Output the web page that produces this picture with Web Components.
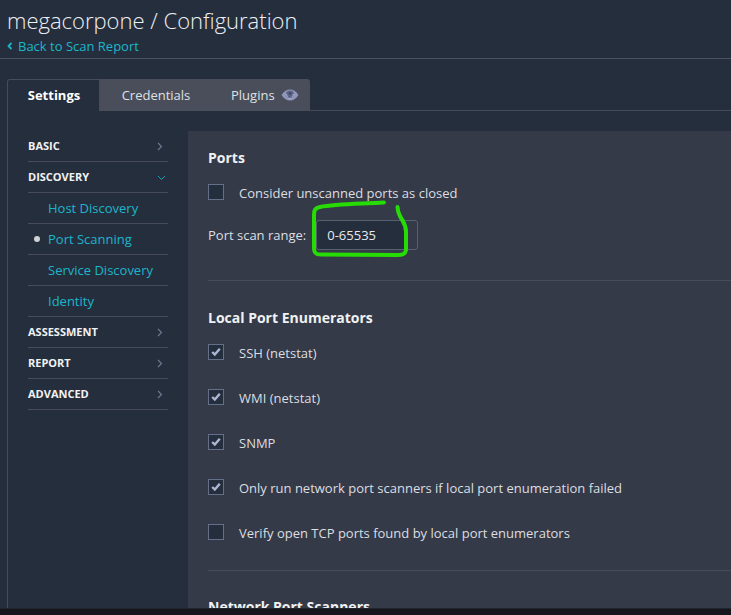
<!doctype html>
<html><head><meta charset="utf-8"><title>Configuration</title>
<style>
html,body{margin:0;height:615px;overflow:hidden;background:#15171c}
body{font-family:"Open Sans",sans-serif;color:#e8eaee}
</style></head><body>
<app-page>
  <page-header slot="header" title="megacorpone / Configuration" back="Back to Scan Report"></page-header>
  <tab-bar slot="tabs"></tab-bar>
  <side-nav slot="nav"></side-nav>
  <settings-panel slot="panel"></settings-panel>
</app-page>
<script>
function def(name, css, html){
  customElements.define(name, class extends HTMLElement{
    connectedCallback(){
      if(this.shadowRoot) return;
      const r=this.attachShadow({mode:'open'});
      r.innerHTML='<style>'+css+'</style>'+(typeof html==='function'?html(this):html);
    }
  });
}
def('app-page',`
:host{display:block;height:608px;background:#252e3d;position:relative;overflow:hidden;border-bottom:1px solid #20242d}
.body{margin:0 0 0 7px;border-left:1px solid #464c58;display:flex;gap:20px;padding:20px 0 0 20px;height:498px;box-sizing:border-box}
.tabs{margin:20px 0 0 7px}
svg{position:absolute;left:0;top:0;pointer-events:none}
::slotted(side-nav){flex:0 0 140px}
::slotted(settings-panel){flex:1 1 auto}
`,`<slot name="header"></slot><div class="tabs"><slot name="tabs"></slot></div>
<div class="body"><slot name="nav"></slot><slot name="panel"></slot></div>
<svg width="731" height="615" viewBox="0 0 731 615" fill="none"><path d="M384 202.500 C360 204 336 204 320 207 C315 208 314 210 314 215 L314 248 C314 253 316 254.500 321 254.500 L398 255 C404 255 406 253 406 249 L406 232 C406 224 403 222 400 216 C398 212 397.500 210 397.500 207" stroke="#27dc05" stroke-width="4" stroke-linecap="round" stroke-linejoin="round"/></svg>`);
def('page-header',`
:host{display:block;height:58px;border-bottom:1px solid #4b505b;padding-left:7px}
h1{margin:0;padding-top:4px;font:300 22px/32px "Open Sans",sans-serif;color:#eef0f3}
a{display:flex;align-items:center;gap:5px;margin-top:1px;font:400 13px/18px "Open Sans",sans-serif;color:#1cb6cb}
svg{display:block;margin-top:-1px}
`,h=>`<h1>${h.getAttribute('title')}</h1><a><svg width="6" height="8" viewBox="0 0 6 8"><path d="M4.500 1 L1.500 4 L4.500 7" fill="none" stroke="#1cb6cb" stroke-width="1.800"/></svg>${h.getAttribute('back')}</a>`);
def('tab-bar',`
:host{display:flex;height:32px;font:400 13px/32px "Open Sans",sans-serif;position:relative}
.t{background:#4a4e5a;color:#dfe1e5;box-sizing:border-box;text-align:center;height:32px}
.on{width:93px;background:#252e3d;color:#fff;font-weight:700;border:1px solid #464c58;border-bottom:0;border-radius:3px 0 0 0;line-height:30px;padding-left:1px}
.c{width:110px;padding-left:2px}
.p{width:100px;display:flex;gap:6px;align-items:center;border-radius:0 3px 0 0;padding-left:21px;text-align:left}
.fill{flex:1;height:32px;border-bottom:1px solid #464c58;box-sizing:border-box}
svg{display:block}
`,`<div class="t on">Settings</div><div class="t c">Credentials</div><div class="t p">Plugins<svg width="18" height="12" viewBox="0 0 18 12"><path d="M0.500 6 C3 2 6 0.500 9 0.500 C12 0.500 15 2 17.500 6 C15 10 12 11.500 9 11.500 C6 11.500 3 10 0.500 6Z" fill="#8f97bd"/><circle cx="9" cy="5.500" r="4" fill="#5c6488"/><path d="M5.500 5 C6 8 7 9.500 9 9.500 C11 9.500 12 8 12.500 5" fill="none" stroke="#aeb4d2" stroke-width="1"/><circle cx="9" cy="4.500" r="1.300" fill="#3f4563"/></svg></div><div class="fill"></div>`);
def('nav-item',`
:host{display:flex;align-items:center;height:31px;box-sizing:border-box;border-bottom:1px solid #474c58;position:relative}
.s{font:700 11px/30px "Open Sans",sans-serif;color:#f1f2f4;flex:1}
.l{font:400 13px/30px "Open Sans",sans-serif;color:#1cb6cb;padding-left:20px;flex:1}
i{position:absolute;left:6px;top:12px;width:6px;height:6px;border-radius:50%;background:#cfd1d4}
svg{display:block;margin-right:2px;margin-top:1px}
`,h=>{
  const t=h.getAttribute('text');
  if(h.hasAttribute('sub')) return `${h.hasAttribute('current')?'<i></i>':''}<span class="l">${t}</span>`;
  return `<span class="s">${t}</span>`+(h.hasAttribute('open')
   ?`<svg width="9" height="6" viewBox="0 0 9 6"><path d="M1 1 L4.500 4.500 L8 1" fill="none" stroke="#1a9db2" stroke-width="1"/></svg>`
   :`<svg width="6" height="9" viewBox="0 0 6 9" style="margin-right:5px"><path d="M1 1 L4.500 4.500 L1 8" fill="none" stroke="#717a95" stroke-width="1.100"/></svg>`);
});
def('side-nav',`:host{display:block}`,`
<nav-item text="BASIC"></nav-item>
<nav-item text="DISCOVERY" open></nav-item>
<nav-item sub text="Host Discovery"></nav-item>
<nav-item sub current text="Port Scanning"></nav-item>
<nav-item sub text="Service Discovery"></nav-item>
<nav-item sub text="Identity"></nav-item>
<nav-item text="ASSESSMENT"></nav-item>
<nav-item text="REPORT"></nav-item>
<nav-item text="ADVANCED"></nav-item>`);
def('check-row',`
:host{display:flex;align-items:center;gap:15px;height:16px;font:400 13px/16px "Open Sans",sans-serif;color:#dcdee2}
b{flex:0 0 16px;height:16px;box-sizing:border-box;border:1px solid #64708a;background:#252e3d;display:block}
svg{display:block;margin:2px 0 0 2px}
span{position:relative;top:1px}
`,h=>`<b>${h.hasAttribute('checked')?'<svg width="10" height="10" viewBox="0 0 10 10"><path d="M1.200 5 L3.800 7.500 L8.800 1.800" fill="none" stroke="#aeb6d4" stroke-width="2.400"/></svg>':''}</b><span>${h.getAttribute('text')}</span>`);
def('settings-panel',`
:host{display:block;background:#343a47;padding:0 0 0 20px;overflow:hidden;box-sizing:border-box;height:478px}
h2{margin:0;font:700 14px/20px "Open Sans",sans-serif;color:#f0f1f3}
.first{padding-top:17px}
hr{border:0;border-top:1px solid #474c58;margin:0}
.range{display:flex;align-items:center;gap:10px;margin-top:20px;font:400 13px/16px "Open Sans",sans-serif;color:#dcdee2}
.input{width:102px;height:30px;box-sizing:border-box;border:1px solid #58606f;border-radius:3px;background:linear-gradient(90deg,#252e3d 0 88%,#343a47 88%);padding-left:10px;font:400 13px/28px "Open Sans",sans-serif;color:#e8eaee}
.list{display:flex;flex-direction:column;gap:29px}
`,`<div class="first"><h2>Ports</h2>
<check-row style="margin-top:16px" text="Consider unscanned ports as closed"></check-row>
<div class="range">Port scan range:<div class="input">0-65535</div></div></div>
<hr style="margin-top:30px">
<h2 style="margin-top:27px">Local Port Enumerators</h2>
<div class="list" style="margin-top:16px">
<check-row checked text="SSH (netstat)"></check-row>
<check-row checked text="WMI (netstat)"></check-row>
<check-row checked text="SNMP"></check-row>
<check-row checked text="Only run network port scanners if local port enumeration failed"></check-row>
<check-row text="Verify open TCP ports found by local port enumerators"></check-row>
</div>
<hr style="margin-top:30px">
<h2 style="margin-top:26px">Network Port Scanners</h2>`);
</script>
</body></html>
